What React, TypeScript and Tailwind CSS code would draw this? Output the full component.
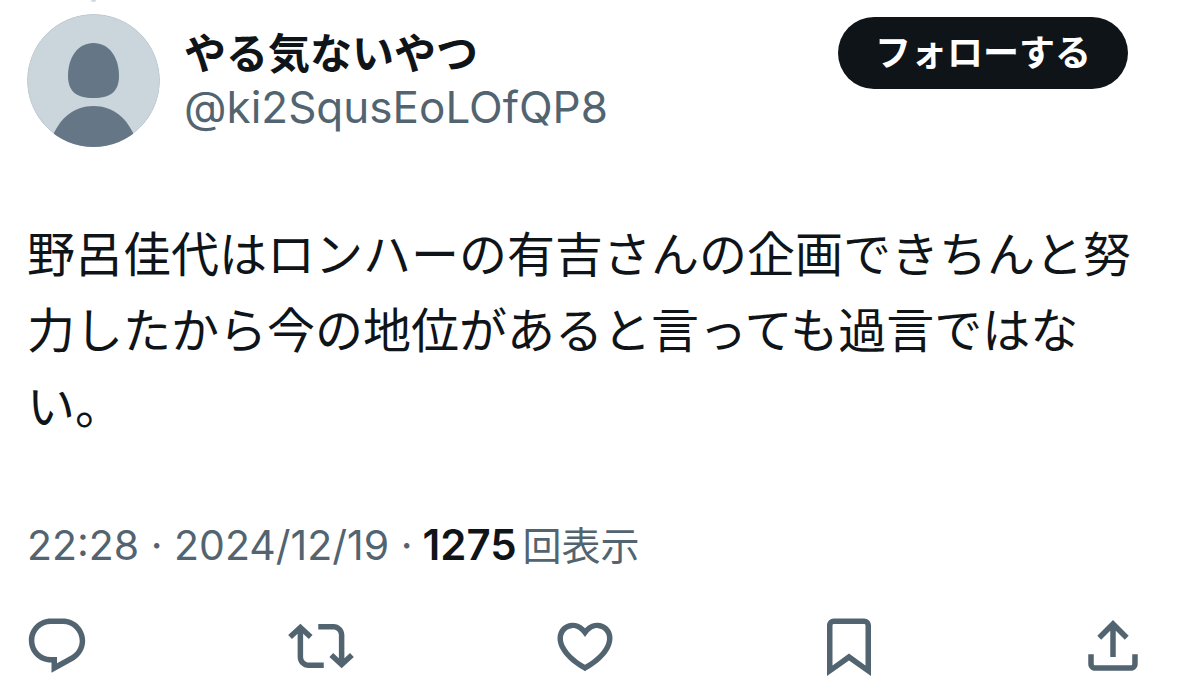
import React from 'react';

// Action bar icons (24x24 grid)
const ACTIONS = [
    {
        label: '返信',
        path: 'M1.751 10c0-4.42 3.584-8 8.005-8h4.366c4.49 0 8.129 3.64 8.129 8.13 0 2.96-1.607 5.68-4.196 7.11l-8.054 4.46v-3.69h-.067c-4.49.1-8.183-3.51-8.183-8.01zm8.005-6c-3.317 0-6.005 2.69-6.005 6 0 3.37 2.77 6.08 6.138 6.01l.351-.01h1.761v2.3l5.087-2.81c1.951-1.08 3.163-3.13 3.163-5.36 0-3.39-2.744-6.13-6.129-6.13H9.756z'
    },
    {
        label: 'リポスト',
        path: 'M4.5 3.88l4.432 4.14-1.364 1.46L5.5 7.55V16c0 1.1.896 2 2 2H13v2H7.5c-2.209 0-4-1.79-4-4V7.55L1.432 9.48.068 8.02 4.5 3.88zM16.5 6H11V4h5.5c2.209 0 4 1.79 4 4v8.45l2.068-1.93 1.364 1.46-4.432 4.14-4.432-4.14 1.364-1.46 2.068 1.93V8c0-1.1-.896-2-2-2z'
    },
    {
        label: 'いいね',
        path: 'M16.697 5.5c-1.222-.06-2.679.51-3.89 2.16l-.805 1.09-.806-1.09C9.984 6.01 8.526 5.44 7.304 5.5c-1.243.07-2.349.78-2.91 1.91-.552 1.12-.633 2.78.479 4.82 1.074 1.97 3.257 4.27 7.129 6.61 3.87-2.34 6.052-4.64 7.126-6.61 1.111-2.04 1.03-3.7.477-4.82-.561-1.13-1.666-1.84-2.908-1.91zm4.187 7.69c-1.351 2.48-4.001 5.12-8.379 7.67l-.503.3-.504-.3c-4.379-2.55-7.029-5.19-8.382-7.67-1.36-2.5-1.41-4.86-.514-6.67.887-1.79 2.647-2.91 4.601-3.01 1.651-.09 3.368.56 4.798 2.01 1.429-1.45 3.146-2.1 4.796-2.01 1.954.1 3.714 1.22 4.601 3.01.896 1.81.846 4.17-.514 6.67z'
    },
    {
        label: 'ブックマーク',
        path: 'M4 4.5C4 3.12 5.119 2 6.5 2h11C18.881 2 20 3.12 20 4.5v18.44l-8-5.71-8 5.71V4.5zM6.5 4c-.276 0-.5.22-.5.5v14.56l6-4.29 6 4.29V4.5c0-.28-.224-.5-.5-.5h-11z'
    },
    {
        label: '共有',
        path: 'M12 2.59l5.7 5.7-1.41 1.42L13 6.41V16h-2V6.41l-3.3 3.3-1.41-1.42L12 2.59zM21 15l-.02 3.51c0 1.38-1.12 2.49-2.5 2.49H5.5C4.11 21 3 19.88 3 18.5V15h2v3.5c0 .28.22.5.5.5h12.98c.28 0 .5-.22.5-.5L19 15h2z'
    },
];

const Avatar: React.FC = () => (
    <svg viewBox="0 0 133 133" className="size-[133px]" aria-hidden="true">
        <defs>
            <clipPath id="avatar-clip">
                <circle cx="66.5" cy="66.5" r="66.5" />
            </clipPath>
        </defs>
        <g clipPath="url(#avatar-clip)">
            <circle cx="66.5" cy="66.5" r="66" fill="#cbd6dc" stroke="#bcc8cf" />
            <path
                d="M66.5 29C82 29 92 43 92 62C92 77 84 84 66.5 84C49 84 41 77 41 62C41 43 51 29 66.5 29Z"
                fill="#657786"
            />
            <path d="M24 126C32 104 47 92 66.5 92C86 92 101 104 109 126V133H24Z" fill="#657786" />
        </g>
    </svg>
);

const App: React.FC = () => {
    return (
        <article className="bg-white text-[#0f1419] font-['Inter','Noto_Sans_CJK_JP',sans-serif]" lang="ja">
            {/* Header */}
            <header className="flex items-start pl-[27px] pr-[51px]">
                <div className="flex flex-col items-center gap-3 shrink-0">
                    {/* End of the thread line */}
                    <div className="w-[5px] h-0.5 rounded-b-full bg-[#cfd9de]" />
                    <Avatar />
                </div>
                <div className="ml-6 mt-7 min-w-0 flex-1">
                    <h1 className="text-[42px] leading-[52px] font-bold">やる気ないやつ</h1>
                    <a href="#profile" className="block text-[44px] leading-[54px] text-[#536471]">@ki2SqusEoLOfQP8</a>
                </div>
                <button
                    type="button"
                    className="mt-[17px] h-[72px] px-[37px] shrink-0 rounded-full bg-[#0f1419] text-white text-[36px] leading-[48px] font-bold"
                >
                    フォローする
                </button>
            </header>

            {/* Text */}
            <p className="mt-[70px] pl-[27px] pr-6 text-[48px] leading-[76px]">
                野呂佳代はロンハーの有吉さんの企画できちんと努力したから今の地位があると言っても過言ではない。
            </p>

            {/* Date and views */}
            <div className="mt-[72px] pl-[27px] text-[41px] leading-[56px] text-[#536471] flex items-baseline gap-2.5 whitespace-nowrap">
                <time dateTime="2024-12-19T22:28">22:28 · 2024/12/19 ·</time>
                <span>
                    <strong className="text-[42px] font-semibold text-[#0f1419]">1275</strong>
                    <span className="ml-1.5 text-[39px]">回表示</span>
                </span>
            </div>

            {/* Actions */}
            <div className="mt-[39px] pl-6 pr-[33px] flex justify-between">
                {ACTIONS.map((action) => (
                    <button key={action.label} type="button" aria-label={action.label} className="text-[#536471]">
                        <svg viewBox="0 0 24 24" fill="currentColor" className="size-[66px]">
                            <path d={action.path} />
                        </svg>
                    </button>
                ))}
            </div>
        </article>
    );
};

export default App;
